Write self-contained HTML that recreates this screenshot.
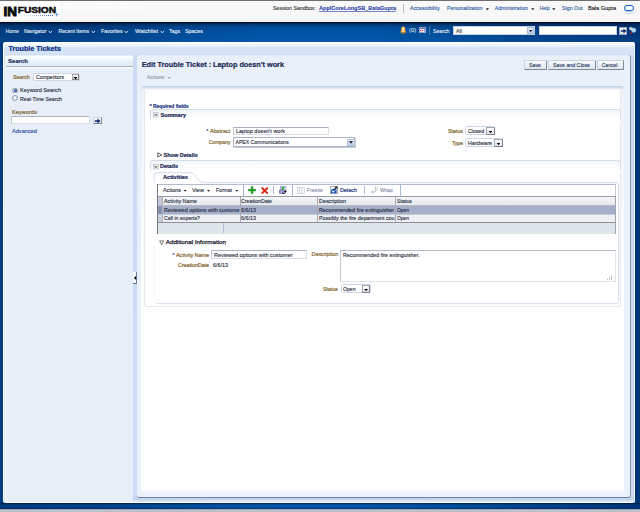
<!DOCTYPE html>
<html><head><meta charset="utf-8"><title>Trouble Tickets</title>
<style>
html,body{margin:0;padding:0}
body{width:640px;height:512px;overflow:hidden;position:relative;background:linear-gradient(90deg,#003d80 0,#004087 14%,#004892 24%,#004f9e 32%,#0054a6 42%,#0054a6 58%,#004d9b 70%,#004189 85%,#003678 100%);font-family:'Liberation Sans',sans-serif}
div,span,svg{position:absolute;box-sizing:border-box}
.t{white-space:pre;transform-origin:0 50%}
.inp{background:#fff;border:1px solid #d9dfe7;border-top-color:#aab4c0;border-left-color:#bfc8d3}
.sel{background:#fff;border:1px solid #cbd6e8;border-radius:1.5px}
.ddb{background:linear-gradient(#fff,#e1e4ea);border:0.9px solid #a4a7ad;border-right-color:#7b7e85;border-bottom-color:#7b7e85}
.ddb i{position:absolute;left:50%;top:50%;margin:0px 0 0 -2px;width:4px;height:2.4px;background:#000;clip-path:polygon(0 0,100% 0,50% 100%)}
.btn{background:linear-gradient(#f9fafb,#e0e4ea);border:1px solid #cdd3dc;border-right-color:#7f8897;border-bottom-color:#7f8897;border-radius:1px}
.arr{width:4px;height:2.3px;background:#222;clip-path:polygon(0 0,100% 0,50% 100%)}
.vs{width:1px;background:#a9b8d2}
.rad{border-radius:50%;border:1px solid #8f99a7;background:radial-gradient(#fbfbfc 25%,#cdd2da)}
</style></head><body>
<!-- header -->
<div style="left:0;top:0;width:640px;height:23px;background:linear-gradient(#f9f9f9 0,#f7f7f7 75%,#f2f2f2 100%);border-top:1px solid #6f6f6f"></div>
<div style="left:0;top:22.1px;width:640px;height:1.3px;background:#0a0d18"></div>
<div style="left:0;top:23.3px;width:640px;height:19.2px;background:linear-gradient(rgba(0,10,40,.62) 0,rgba(0,15,50,.25) 2.5px,rgba(0,20,60,.08) 5px,rgba(0,20,60,0) 9px,rgba(40,120,220,.10) 100%),linear-gradient(90deg,#003d80 0,#004087 14%,#004892 24%,#004f9e 32%,#0054a6 42%,#0054a6 58%,#004d9b 70%,#004189 85%,#003678 100%)"></div>
<!-- logo -->
<div style="left:3px;top:2px;width:57px;height:17px;background:#fff"></div>
<div style="left:18px;top:14.9px;width:36px;height:1.2px;background:repeating-linear-gradient(90deg,#3f72c4 0,#3f72c4 1px,#fff 1px,#fff 2px)"></div>
<div style="left:18px;top:14.9px;width:30px;height:1.2px;background:linear-gradient(90deg,rgba(255,255,255,.9),rgba(255,255,255,.75) 40%,rgba(255,255,255,0))"></div>
<div style="left:56px;top:11.6px;width:1.1px;height:5.6px;background:linear-gradient(rgba(60,120,210,0),#3c78d2 45%,#3c78d2 60%,rgba(60,120,210,0))"></div>
<div style="left:53.6px;top:13.9px;width:6.4px;height:1px;background:linear-gradient(90deg,rgba(60,120,210,0),#5c90dc 50%,rgba(60,120,210,0))"></div>
<!-- header right -->
<div class="vs" style="left:403px;top:4px;height:8.5px;background:#b7c0cf"></div>
<div class="arr" style="left:485.6px;top:8.2px;width:3.5px;height:2px;background:#2a2a2a"></div>
<div class="arr" style="left:531px;top:8.2px;width:3.5px;height:2px;background:#2a2a2a"></div>
<div class="arr" style="left:552px;top:8.2px;width:3.5px;height:2px;background:#2a2a2a"></div>
<div style="left:624.6px;top:11.6px;width:9px;height:2.4px;border-radius:50%;border:0.8px solid #c9dcf5;border-top:0"></div>
<div style="left:624px;top:5px;width:10.3px;height:6px;border-radius:3px;border:1.4px solid #1560c8;box-shadow:0 0.5px 0.5px #6d9de0"></div>
<!-- nav arrows (chevrons) -->
<svg style="left:48px;top:29.5px" width="5" height="4" viewBox="0 0 5 4"><path d="M0.6 0.8 L2.3 2.9 L4 0.8" fill="none" stroke="#dfe8f5" stroke-width="0.9"/></svg>
<svg style="left:90.5px;top:29.5px" width="5" height="4" viewBox="0 0 5 4"><path d="M0.6 0.8 L2.3 2.9 L4 0.8" fill="none" stroke="#dfe8f5" stroke-width="0.9"/></svg>
<svg style="left:123.8px;top:29.5px" width="5" height="4" viewBox="0 0 5 4"><path d="M0.6 0.8 L2.3 2.9 L4 0.8" fill="none" stroke="#dfe8f5" stroke-width="0.9"/></svg>
<svg style="left:159.6px;top:29.5px" width="5" height="4" viewBox="0 0 5 4"><path d="M0.6 0.8 L2.3 2.9 L4 0.8" fill="none" stroke="#dfe8f5" stroke-width="0.9"/></svg>
<!-- bell -->
<svg style="left:399.4px;top:25.9px" width="8.4" height="8.4" viewBox="0 0 8 8"><path d="M4 0.5 C5.7 0.5 5.9 2 5.9 3.5 C5.9 4.8 6.5 5.2 7.5 6.3 L0.5 6.3 C1.5 5.2 2.1 4.8 2.1 3.5 C2.1 2 2.3 0.5 4 0.5 Z" fill="#f5a31a"/><path d="M4 1 C5 1 5.1 2.3 5.1 3.6 L5.2 5.6 L2.8 5.6 L2.9 3.6 C2.9 2.3 3 1 4 1Z" fill="#fcdba0"/><ellipse cx="4" cy="6.9" rx="1" ry="0.7" fill="#ee9a14"/></svg>
<!-- flag icon -->
<div style="left:418.8px;top:27.3px;width:7.1px;height:5.9px;background:linear-gradient(#6b6fae 0,#6b6fae 1px,#eef0f5 1.2px,#d9dde8 4.6px,#fff 4.9px);border:0.4px solid #9aa3bd"></div>
<div style="left:420.2px;top:29.9px;width:1.3px;height:1.6px;background:#e81414"></div>
<div style="left:421.9px;top:29.9px;width:1.3px;height:1.6px;background:#e81414"></div>
<div style="left:423.6px;top:29px;width:1.6px;height:2.8px;background:#9aa6cf"></div>
<div class="vs" style="left:429px;top:26.2px;height:8.6px;background:#4d72a6"></div>
<!-- nav search -->
<div style="left:453px;top:26.2px;width:82px;height:8.6px;background:#fff;border:0.5px solid #c5cedc"></div>
<div class="ddb" style="left:527px;top:27px;width:7.4px;height:7px;background:linear-gradient(#e8effa,#bccdec);border-color:#a9b9d6"><i style="margin-top:-0.9px"></i></div>
<div style="left:538.5px;top:26.2px;width:78.5px;height:8.6px;background:#fff;border:0.5px solid #c5cedc"></div>
<div style="left:618.6px;top:26.6px;width:8.4px;height:8px;background:linear-gradient(#fff,#e6e9ef);border:0.5px solid #9aa3b3"></div>
<svg style="left:619.6px;top:27.6px" width="7" height="6" viewBox="0 0 7 6"><path d="M0.8 2.25 H3.5 V0.5 L6.4 3 L3.5 5.5 V3.75 H0.8 Z" fill="#0a2766"/></svg>
<svg style="left:629px;top:27px" width="7.5" height="7.5" viewBox="0 0 7.5 7.5"><rect x="0.3" y="0.3" width="3" height="2.6" fill="#d5dde8"/><circle cx="4.6" cy="3.2" r="2" fill="#9fd0f0" stroke="#d6e6f5" stroke-width="0.8"/><path d="M3 4.9 L1.2 6.8" stroke="#d01818" stroke-width="1.1"/></svg>
<!-- outer panel -->
<div style="left:3px;top:42px;width:632px;height:461px;border-radius:3px;background:linear-gradient(#ffffff 0,#eaf1fb 4px,#d6e4f7 6px,#d3e2f6 12px,#cadbf2 14px,#cddcf2 455px,#bfd0ea 456.6px,#d9e5f5 459.4px,#fafcff 460.2px,#fafcff 100%);box-shadow:inset 1.2px 1px 0.5px #fff,inset -1px 0 0.5px #eef4fc"></div>
<!-- search panel -->
<div style="left:5.4px;top:55.2px;width:127.8px;height:446.6px;background:linear-gradient(#e7eef8 0,#e7eef8 11px,#fafcfe 12px,#e7eef8 15px,#e7eef8 100%);border-radius:2.5px 0 0 0;border-left:0.6px solid #f4f8fc"></div>
<div style="left:5.5px;top:55.5px;width:127.5px;height:11px;background:linear-gradient(#fdfeff,#dbe7f6);border-bottom:1px solid #b7b3b4;border-radius:2px 0 0 0"></div>
<div class="sel" style="left:33.4px;top:72.6px;width:46.6px;height:8.6px"></div>
<div class="ddb" style="left:71.6px;top:73.8px;width:7.8px;height:6.6px"><i></i></div>
<div class="rad" style="left:12.2px;top:87.6px;width:5.8px;height:5.8px"></div>
<div style="left:13.6px;top:89px;width:3px;height:3px;border-radius:50%;background:radial-gradient(#3f78d8,#173f98)"></div>
<div class="rad" style="left:12.2px;top:95.4px;width:5.8px;height:5.8px"></div>
<div class="inp" style="left:11.3px;top:115.6px;width:78.8px;height:8.6px"></div>
<div class="btn" style="left:93.3px;top:116.8px;width:8.4px;height:7.6px"></div>
<svg style="left:94.3px;top:117.6px" width="7" height="6" viewBox="0 0 7 6"><path d="M0.8 2.25 H3.5 V0.5 L6.4 3 L3.5 5.5 V3.75 H0.8 Z" fill="#0a2766"/></svg>
<!-- splitter handle -->
<div style="left:133.2px;top:272px;width:3.7px;height:11.6px;background:#f4f7fb;border-right:0.8px solid #6f7f98;border-bottom:0.8px solid #6f7f98"></div>
<svg style="left:133px;top:275px" width="4" height="6" viewBox="0 0 4 6"><path d="M3.1 0.8 L0.9 2.9 L3.1 5 Z" fill="#0a0a0a"/></svg>
<!-- main panel -->
<div style="left:137px;top:55.4px;width:493.6px;height:443px;background:#eaf0f9;border-radius:3px;border-right:1.2px solid #8596b0;border-bottom:1.1px solid #74859f"></div>
<div class="arr" style="left:167.4px;top:76.9px;width:3.4px;height:2px;background:#a3abb8"></div>
<div class="btn" style="left:524px;top:60px;width:22.5px;height:9.6px"></div>
<div class="btn" style="left:548px;top:60px;width:47.5px;height:9.6px"></div>
<div class="btn" style="left:597px;top:60px;width:26.5px;height:9.6px"></div>
<!-- inner panel -->
<div style="left:141px;top:85.5px;width:483.4px;height:407.5px;border-radius:3px;background:linear-gradient(#bccbe2 0,#d3deed 1.5px,#e6edf6 3px,#eff3f9 5px,#f4f7fb 90px,#fff 190px,#fff 403.5px,#f3f6fa 404.5px,#f3f6fa 100%)"></div>
<div style="left:144.4px;top:89.4px;width:476.4px;height:217.2px;background:#fff;border:1px solid #e5e9ef;border-top-color:#f6f8fb;border-radius:2.5px"></div>
<!-- Summary header -->
<div style="left:149.5px;top:109px;width:471px;height:12px;border-radius:2.5px 2.5px 0 0;border:1px solid #d3dce9;border-bottom:0;background:linear-gradient(#f3f6fa,#fff 80%)"></div>
<div style="left:149.5px;top:117px;width:471px;height:5px;background:linear-gradient(rgba(255,255,255,0),#fff)"></div>
<svg class="ic" style="left:153px;top:112.4px" width="6" height="6" viewBox="0 0 6 6"><rect x="0.5" y="0.6" width="4.6" height="4.4" fill="#f1f3f7" stroke="#b4bbc8" stroke-width="0.7"/><path d="M1.5 2.1 L2.8 3.6 L4.1 2.1" fill="none" stroke="#222" stroke-width="0.85"/></svg>
<div class="inp" style="left:233px;top:126.6px;width:96.2px;height:8.7px"></div>
<div class="sel" style="left:233px;top:137.4px;width:122.4px;height:9.2px;border-color:#a9b5c6;border-radius:0;box-shadow:0.5px 0.5px 0.5px #c5ccd6"></div>
<div class="ddb" style="left:347.4px;top:138.6px;width:7.2px;height:7px;background:linear-gradient(#e3ecfa,#b9cbea);border-color:#b3c3df"><i style="margin-top:-0.9px"></i></div>
<div class="sel" style="left:465.2px;top:126.2px;width:29.8px;height:9.2px"></div>
<div class="ddb" style="left:486.2px;top:127px;width:8.6px;height:7.6px"><i></i></div>
<div class="sel" style="left:465.2px;top:138.2px;width:37.8px;height:9.2px"></div>
<div class="ddb" style="left:494.2px;top:139px;width:8.6px;height:7.6px"><i></i></div>
<svg style="left:156.5px;top:152px" width="6" height="6" viewBox="0 0 6 6"><path d="M0.8 0.8 L4.8 2.9 L0.8 5 Z" fill="#fff" stroke="#333" stroke-width="0.8"/></svg>
<!-- Details header -->
<div style="left:149.5px;top:160.4px;width:471px;height:12px;border-radius:2.5px 2.5px 0 0;border:1px solid #d3dce9;border-bottom:0;background:linear-gradient(#f3f6fa,#fff 80%)"></div>
<div style="left:149.5px;top:168.4px;width:471px;height:5px;background:linear-gradient(rgba(255,255,255,0),#fff)"></div>
<svg class="ic" style="left:153px;top:163.6px" width="6" height="6" viewBox="0 0 6 6"><rect x="0.5" y="0.6" width="4.6" height="4.4" fill="#f1f3f7" stroke="#b4bbc8" stroke-width="0.7"/><path d="M1.5 2.1 L2.8 3.6 L4.1 2.1" fill="none" stroke="#222" stroke-width="0.85"/></svg>
<!-- tab + tab panel -->
<svg style="left:150px;top:170px" width="472" height="136" viewBox="0 0 472 136"><path d="M4 131.4 L4 6 Q4 2.6 7.5 2.6 L39 2.6 C47 2.6 46 12.6 55 12.6 L466 12.6 Q468.6 12.6 468.6 15 L468.6 131.4 Q468.6 133.7 466 133.7 L6.4 133.7 Q4 133.7 4 131.4 Z" fill="#fff"/><path d="M4 12.6 L4 6 Q4 2.6 7.5 2.6 L39 2.6 C47 2.6 46 12.6 55 12.6 L466 12.6 Q468.6 12.6 468.6 15 L468.6 131.4 Q468.6 133.7 466 133.7 L6.4 133.7" fill="none" stroke="#ccd8ea" stroke-width="0.9"/><path d="M4 12.6 L4 131.4 Q4 133.7 6.4 133.7" fill="none" stroke="#f2f5f9" stroke-width="0.9"/></svg>
<!-- table -->
<div style="left:157px;top:183.6px;width:459px;height:13px;background:#fff;border:1px solid #c9c9cc;border-top-color:#b2bccc;border-left:0;border-bottom:0"></div>
<div class="vs" style="left:400px;top:184.4px;height:11.8px;background:#a9b9d6"></div>
<div style="left:157px;top:195.8px;width:458.8px;height:38.2px;background:#dfe6e9;border-right:1px solid #a2a6ab"></div>
<div style="left:157px;top:195.8px;width:458px;height:9.9px;background:linear-gradient(#f6f7f9,#e5e8ed);border-top:0.9px solid #989ea7;border-bottom:0.8px solid #b7bac0"></div>
<div style="left:157px;top:205.6px;width:458px;height:8.4px;background:#a7b0cb"></div>
<div style="left:157px;top:214px;width:458px;height:9px;background:#eef0f4;border-top:0.6px solid #c9ccd6;border-bottom:0.9px solid #8b9097"></div>
<div style="left:158px;top:196.6px;width:4px;height:8.6px;background:#c3c9d9"></div>
<div style="left:158px;top:205.6px;width:4px;height:8.4px;background:#8791b3"></div>
<div style="left:158px;top:214.4px;width:4px;height:7.8px;background:#c9cedd"></div>
<div style="left:162px;top:196.6px;width:0.8px;height:25.6px;background:#aeb2bb"></div>
<div style="left:239.8px;top:196.6px;width:0.9px;height:25.6px;background:#a9acb4"></div>
<div style="left:317px;top:196.6px;width:0.9px;height:25.6px;background:#a9acb4"></div>
<div style="left:395.1px;top:196.6px;width:0.9px;height:25.6px;background:#a9acb4"></div>
<div style="left:223px;top:223.4px;width:0.9px;height:10px;background:#b4bdd6"></div>
<div style="left:157px;top:183.6px;width:0.9px;height:50.4px;background:#747678"></div>
<!-- toolbar bits -->
<div class="arr" style="left:183.4px;top:189.7px;width:3.5px;height:2px"></div>
<div class="arr" style="left:206.8px;top:189.7px;width:3.5px;height:2px"></div>
<div class="arr" style="left:235px;top:189.7px;width:3.5px;height:2px"></div>
<div class="vs" style="left:243px;top:185px;height:10.6px"></div>
<svg style="left:247.9px;top:186.1px" width="8.2" height="8.2" viewBox="0 0 8.2 8.2"><path d="M3.25 0.5 H4.95 V3.25 H7.7 V4.95 H4.95 V7.7 H3.25 V4.95 H0.5 V3.25 H3.25 Z" fill="#1aa81c" stroke="#0c7a10" stroke-width="0.45"/></svg>
<svg style="left:260.6px;top:186.8px" width="7.6" height="7.4" viewBox="0 0 7.6 7.4"><path d="M1.3 1.3 L6.3 6.2 M6.3 1.3 L1.3 6.2" stroke="#a01208" stroke-width="2.1" stroke-linecap="round" opacity=".35"/><path d="M1.2 1.1 L6.2 6 M6.2 1.1 L1.2 6" stroke="#e3200f" stroke-width="1.7" stroke-linecap="round"/></svg>
<div class="vs" style="left:273px;top:186.2px;height:7.6px"></div>
<svg style="left:279px;top:186px" width="8.2" height="8.2" viewBox="0 0 8.2 8.2"><rect x="1.4" y="0.4" width="5.6" height="5.6" fill="#e9ebfa" stroke="#7d80c8" stroke-width="0.6"/><path d="M2.7 1.2 L5.3 3.9 M5.3 1.2 L2.7 3.9" stroke="#14a014" stroke-width="1.15"/><rect x="0.2" y="3.7" width="4.7" height="4.1" fill="#6a66b8"/><rect x="1.6" y="4.6" width="1.2" height="1" fill="#fff"/><rect x="3.3" y="4.6" width="1" height="1" fill="#f3f3ff"/><rect x="1.6" y="6.2" width="1.2" height="0.9" fill="#fff"/><rect x="3.4" y="7" width="2.4" height="0.9" fill="#2a1a60"/><path d="M5 5.5 L6.3 4 L7.7 5.5 L6.3 7.1 Z" fill="#0a0a0a"/></svg>
<div class="vs" style="left:292.4px;top:185px;height:10.6px"></div>
<svg style="left:297px;top:186.8px" width="8" height="7" viewBox="0 0 8 7"><rect x="0.4" y="0.4" width="7.2" height="6.2" fill="#f7f8fa" stroke="#c2c7d0" stroke-width="0.7"/><path d="M2.6 0.4 V6.6 M5 0.4 V6.6" stroke="#c9cdd5" stroke-width="0.7"/></svg>
<svg style="left:330px;top:186px" width="8.2" height="8.2" viewBox="0 0 8.2 8.2"><defs><linearGradient id="dg" x1="0" y1="0" x2="0" y2="1"><stop offset="0" stop-color="#5aa6f8"/><stop offset="1" stop-color="#0a38a0"/></linearGradient></defs><rect x="0.45" y="0.45" width="7" height="7.3" fill="#fff" stroke="#9a9a9a" stroke-width="0.75"/><rect x="0.95" y="2.9" width="5.7" height="4.4" fill="url(#dg)"/><ellipse cx="3.3" cy="5.7" rx="1.3" ry="0.8" fill="#fff"/><path d="M3.5 4.2 L6.2 1.5" stroke="#151515" stroke-width="1.1"/><path d="M4.7 0.5 H7.4 V3.2 Z" fill="#111"/></svg>
<div class="vs" style="left:364px;top:186px;height:7.8px"></div>
<svg style="left:370.4px;top:186.4px" width="8" height="7.6" viewBox="0 0 8 7.6"><path d="M5.6 0.6 V4.6 Q5.6 6 4.2 6 H1.6 M3 4.6 L1.4 6 L3 7.2" fill="none" stroke="#b4b9c2" stroke-width="1"/><path d="M7.2 0.8 V5" stroke="#c7cbd2" stroke-width="0.8"/></svg>
<!-- additional info -->
<svg style="left:158.8px;top:239.8px" width="6" height="6" viewBox="0 0 6 6"><path d="M0.6 0.9 L4.6 0.9 L2.6 4.7 Z" fill="#fff" stroke="#444" stroke-width="0.7"/></svg>
<div class="inp" style="left:211.2px;top:250px;width:95.8px;height:9.3px"></div>
<div class="inp" style="left:340px;top:250px;width:275.5px;height:31.7px;border-top-color:#b2bac5;border-left-color:#c3cad4;border-right-color:#dde3e8;border-bottom-color:#dde3e8"></div>
<svg style="left:606px;top:274px" width="7" height="7" viewBox="0 0 7 7"><path d="M1.5 6 V4.6 M3.5 6 V3 M5.5 6 V1.2" stroke="#a4a9b2" stroke-width="0.7"/></svg>
<div class="sel" style="left:340.8px;top:284.2px;width:29.8px;height:9.2px"></div>
<div class="ddb" style="left:361.8px;top:285px;width:8.6px;height:7.6px"><i></i></div>
<!-- bottom -->
<div style="left:0;top:502.8px;width:640px;height:5.9px;background:linear-gradient(rgba(0,10,45,.75) 0,rgba(0,15,50,.25) 1px,rgba(0,20,60,0) 2px,rgba(0,20,60,0) 4.4px,rgba(0,10,45,.55) 100%)"></div>
<div style="left:0;top:508.6px;width:640px;height:3.4px;background:linear-gradient(#9aa4b4,#b3bbc8 1px,#bcc3ce)"></div>
<svg style="left:0;top:0" width="640" height="512" viewBox="0 0 640 512" font-family="'Liberation Sans', sans-serif" font-size="5.6">
<text x="3.5" y="15.94" textLength="13.4" lengthAdjust="spacingAndGlyphs" fill="#0d0d0d" font-size="12.4" font-weight="bold" stroke="#0d0d0d" stroke-width="0.9">IN</text>
<text x="17.7" y="13.04" textLength="38.3" lengthAdjust="spacingAndGlyphs" fill="#0d0d0d" font-size="8.5" font-weight="bold" stroke="#0d0d0d" stroke-width="0.5">FUSION</text>
<text x="273" y="10.10" textLength="43" lengthAdjust="spacingAndGlyphs" fill="#333" stroke="#333" stroke-width="0.12">Session Sandbox:</text>
<text x="319" y="10.10" textLength="77" lengthAdjust="spacingAndGlyphs" fill="#16329e" font-weight="bold" text-decoration="underline" stroke="#16329e" stroke-width="0.05">ApplCoreLongSB_BalaGupta</text>
<text x="410" y="10.10" textLength="29.7" lengthAdjust="spacingAndGlyphs" fill="#2c58a3" stroke="#2c58a3" stroke-width="0.12">Accessibility</text>
<text x="447" y="10.10" textLength="35.5" lengthAdjust="spacingAndGlyphs" fill="#2c58a3" stroke="#2c58a3" stroke-width="0.12">Personalization</text>
<text x="494.7" y="10.10" textLength="33.3" lengthAdjust="spacingAndGlyphs" fill="#2c58a3" stroke="#2c58a3" stroke-width="0.12">Administration</text>
<text x="539.7" y="10.10" textLength="10.1" lengthAdjust="spacingAndGlyphs" fill="#2c58a3" stroke="#2c58a3" stroke-width="0.12">Help</text>
<text x="562" y="10.10" textLength="20.6" lengthAdjust="spacingAndGlyphs" fill="#2c58a3" stroke="#2c58a3" stroke-width="0.12">Sign Out</text>
<text x="588" y="10.10" textLength="28" lengthAdjust="spacingAndGlyphs" fill="#111" stroke="#111" stroke-width="0.12">Bala Gupta</text>
<text x="64.6" y="10.06" textLength="76.4" lengthAdjust="spacingAndGlyphs" fill="#ffffff" font-size="8" stroke="#ffffff" stroke-width="0.1">Fusion Applications</text>
<text x="5.8" y="32.90" textLength="13.1" lengthAdjust="spacingAndGlyphs" fill="#e8eef8" stroke="#e8eef8" stroke-width="0.12">Home</text>
<text x="23.9" y="32.90" textLength="22.5" lengthAdjust="spacingAndGlyphs" fill="#e8eef8" stroke="#e8eef8" stroke-width="0.12">Navigator</text>
<text x="58.5" y="32.90" textLength="30.5" lengthAdjust="spacingAndGlyphs" fill="#e8eef8" stroke="#e8eef8" stroke-width="0.12">Recent Items</text>
<text x="101" y="32.90" textLength="21.5" lengthAdjust="spacingAndGlyphs" fill="#e8eef8" stroke="#e8eef8" stroke-width="0.12">Favorites</text>
<text x="135" y="32.90" textLength="23" lengthAdjust="spacingAndGlyphs" fill="#e8eef8" stroke="#e8eef8" stroke-width="0.12">Watchlist</text>
<text x="169" y="32.90" textLength="11" lengthAdjust="spacingAndGlyphs" fill="#e8eef8" stroke="#e8eef8" stroke-width="0.12">Tags</text>
<text x="185" y="32.90" textLength="18" lengthAdjust="spacingAndGlyphs" fill="#e8eef8" stroke="#e8eef8" stroke-width="0.12">Spaces</text>
<text x="409" y="32.30" textLength="7.2" lengthAdjust="spacingAndGlyphs" fill="#e8eef8" stroke="#e8eef8" stroke-width="0.04">(0)</text>
<text x="433" y="32.70" textLength="16.5" lengthAdjust="spacingAndGlyphs" fill="#e8eef8" stroke="#e8eef8" stroke-width="0.12">Search</text>
<text x="456" y="32.70" textLength="6" lengthAdjust="spacingAndGlyphs" fill="#333" stroke="#333" stroke-width="0.12">All</text>
<text x="8.4" y="51.07" textLength="52.6" lengthAdjust="spacingAndGlyphs" fill="#0b2d82" font-size="6.9" font-weight="bold" stroke="#0b2d82" stroke-width="0.22">Trouble Tickets</text>
<text x="8.1" y="62.82" textLength="19.9" lengthAdjust="spacingAndGlyphs" fill="#1f3564" font-size="6.2" font-weight="bold" stroke="#1f3564" stroke-width="0.22">Search</text>
<text x="13" y="79.00" textLength="16.7" lengthAdjust="spacingAndGlyphs" fill="#84672f" stroke="#84672f" stroke-width="0.2">Search</text>
<text x="36" y="79.00" textLength="28" lengthAdjust="spacingAndGlyphs" fill="#222a3a" stroke="#222a3a" stroke-width="0.12">Competitors</text>
<text x="20" y="92.30" textLength="41" lengthAdjust="spacingAndGlyphs" fill="#222a3a" stroke="#222a3a" stroke-width="0.12">Keyword Search</text>
<text x="20" y="100.70" textLength="42" lengthAdjust="spacingAndGlyphs" fill="#222a3a" stroke="#222a3a" stroke-width="0.12">Real-Time Search</text>
<text x="12" y="113.60" textLength="25" lengthAdjust="spacingAndGlyphs" fill="#84672f" stroke="#84672f" stroke-width="0.2">Keywords</text>
<text x="12" y="133.00" textLength="25" lengthAdjust="spacingAndGlyphs" fill="#1f4a9c" stroke="#1f4a9c" stroke-width="0.12">Advanced</text>
<text x="141.7" y="67.22" textLength="142.3" lengthAdjust="spacingAndGlyphs" fill="#1a2a55" font-size="7.6" font-weight="bold" stroke="#1a2a55" stroke-width="0.22">Edit Trouble Ticket : Laptop doesn't work</text>
<text x="146.7" y="79.30" textLength="17.6" lengthAdjust="spacingAndGlyphs" fill="#8e98a8" stroke="#8e98a8" stroke-width="0.12">Actions</text>
<text x="149.7" y="107.93" textLength="38.8" lengthAdjust="spacingAndGlyphs" fill="#1f3a8a" font-size="5.4" font-weight="bold" stroke="#1f3a8a" stroke-width="0.22">* Required fields</text>
<text x="160.5" y="117.00" textLength="25.5" lengthAdjust="spacingAndGlyphs" fill="#1a2a55" font-weight="bold" stroke="#1a2a55" stroke-width="0.22">Summary</text>
<text x="206.3" y="133.20" textLength="2.0" lengthAdjust="spacingAndGlyphs" fill="#1f3a8a" stroke="#1f3a8a" stroke-width="0.12">*</text>
<text x="210" y="132.80" textLength="20.3" lengthAdjust="spacingAndGlyphs" fill="#84672f" stroke="#84672f" stroke-width="0.2">Abstract</text>
<text x="236" y="132.80" textLength="49" lengthAdjust="spacingAndGlyphs" fill="#222a3a" stroke="#222a3a" stroke-width="0.12">Laptop doesn't work</text>
<text x="208.7" y="143.70" textLength="21.6" lengthAdjust="spacingAndGlyphs" fill="#84672f" stroke="#84672f" stroke-width="0.2">Company</text>
<text x="235.5" y="143.70" textLength="53.2" lengthAdjust="spacingAndGlyphs" fill="#222a3a" stroke="#222a3a" stroke-width="0.12">APEX Communications</text>
<text x="448" y="133.00" textLength="15" lengthAdjust="spacingAndGlyphs" fill="#84672f" stroke="#84672f" stroke-width="0.22">Status</text>
<text x="467.8" y="133.10" textLength="16.4" lengthAdjust="spacingAndGlyphs" fill="#222a3a" stroke="#222a3a" stroke-width="0.12">Closed</text>
<text x="452" y="145.00" textLength="11" lengthAdjust="spacingAndGlyphs" fill="#84672f" stroke="#84672f" stroke-width="0.22">Type</text>
<text x="467.8" y="145.10" textLength="24.4" lengthAdjust="spacingAndGlyphs" fill="#222a3a" stroke="#222a3a" stroke-width="0.12">Hardware</text>
<text x="163.5" y="156.90" textLength="34.3" lengthAdjust="spacingAndGlyphs" fill="#1a2a55" font-weight="bold" stroke="#1a2a55" stroke-width="0.22">Show Details</text>
<text x="160" y="167.80" textLength="18" lengthAdjust="spacingAndGlyphs" fill="#1a2a55" font-weight="bold" stroke="#1a2a55" stroke-width="0.22">Details</text>
<text x="163" y="179.00" textLength="25" lengthAdjust="spacingAndGlyphs" fill="#1a2a55" font-weight="bold" stroke="#1a2a55" stroke-width="0.22">Activities</text>
<text x="163" y="192.00" textLength="18" lengthAdjust="spacingAndGlyphs" fill="#222a3a" stroke="#222a3a" stroke-width="0.12">Actions</text>
<text x="192" y="192.00" textLength="12" lengthAdjust="spacingAndGlyphs" fill="#222a3a" stroke="#222a3a" stroke-width="0.12">View</text>
<text x="216" y="192.00" textLength="16" lengthAdjust="spacingAndGlyphs" fill="#222a3a" stroke="#222a3a" stroke-width="0.12">Format</text>
<text x="306.7" y="192.00" textLength="16.3" lengthAdjust="spacingAndGlyphs" fill="#7f8ea9" stroke="#7f8ea9" stroke-width="0.12">Freeze</text>
<text x="340" y="192.00" textLength="17" lengthAdjust="spacingAndGlyphs" fill="#1c3a7e" stroke="#1c3a7e" stroke-width="0.2">Detach</text>
<text x="380" y="192.00" textLength="12.6" lengthAdjust="spacingAndGlyphs" fill="#7f8ea9" stroke="#7f8ea9" stroke-width="0.12">Wrap</text>
<text x="164" y="203.00" textLength="33" lengthAdjust="spacingAndGlyphs" fill="#222a3a" stroke="#222a3a" stroke-width="0.12">Activity Name</text>
<text x="241" y="203.00" textLength="31" lengthAdjust="spacingAndGlyphs" fill="#222a3a" stroke="#222a3a" stroke-width="0.12">CreationDate</text>
<text x="319" y="203.00" textLength="27" lengthAdjust="spacingAndGlyphs" fill="#222a3a" stroke="#222a3a" stroke-width="0.12">Description</text>
<text x="397" y="203.00" textLength="15" lengthAdjust="spacingAndGlyphs" fill="#222a3a" stroke="#222a3a" stroke-width="0.12">Status</text>
<text x="164" y="212.00" textLength="75.5" lengthAdjust="spacingAndGlyphs" fill="#222a3a" stroke="#222a3a" stroke-width="0.12">Reviewed options with custome</text>
<text x="241" y="212.00" textLength="15" lengthAdjust="spacingAndGlyphs" fill="#222a3a" stroke="#222a3a" stroke-width="0.12">6/6/13</text>
<text x="319" y="212.00" textLength="75" lengthAdjust="spacingAndGlyphs" fill="#222a3a" stroke="#222a3a" stroke-width="0.12">Recommended fire extinguisher</text>
<text x="397" y="212.00" textLength="12" lengthAdjust="spacingAndGlyphs" fill="#222a3a" stroke="#222a3a" stroke-width="0.12">Open</text>
<text x="164" y="220.10" textLength="36" lengthAdjust="spacingAndGlyphs" fill="#222a3a" stroke="#222a3a" stroke-width="0.12">Call in experts?</text>
<text x="241" y="220.10" textLength="15" lengthAdjust="spacingAndGlyphs" fill="#222a3a" stroke="#222a3a" stroke-width="0.12">6/6/13</text>
<text x="319" y="220.10" textLength="75.5" lengthAdjust="spacingAndGlyphs" fill="#222a3a" stroke="#222a3a" stroke-width="0.12">Possibly the fire department cou</text>
<text x="397" y="220.10" textLength="12" lengthAdjust="spacingAndGlyphs" fill="#222a3a" stroke="#222a3a" stroke-width="0.12">Open</text>
<text x="165.8" y="244.38" textLength="60.2" lengthAdjust="spacingAndGlyphs" fill="#1c2030" font-size="5.8" stroke="#1c2030" stroke-width="0.25">Additional Information</text>
<text x="172.5" y="257.30" textLength="2.0" lengthAdjust="spacingAndGlyphs" fill="#1f3a8a" stroke="#1f3a8a" stroke-width="0.12">*</text>
<text x="176" y="257.10" textLength="33" lengthAdjust="spacingAndGlyphs" fill="#84672f" stroke="#84672f" stroke-width="0.2">Activity Name</text>
<text x="214" y="257.10" textLength="78.5" lengthAdjust="spacingAndGlyphs" fill="#222a3a" stroke="#222a3a" stroke-width="0.12">Reviewed options with customer</text>
<text x="178" y="267.10" textLength="31" lengthAdjust="spacingAndGlyphs" fill="#84672f" stroke="#84672f" stroke-width="0.22">CreationDate</text>
<text x="213" y="267.10" textLength="15" lengthAdjust="spacingAndGlyphs" fill="#222a3a" stroke="#222a3a" stroke-width="0.12">6/6/13</text>
<text x="311.6" y="255.80" textLength="26.7" lengthAdjust="spacingAndGlyphs" fill="#84672f" stroke="#84672f" stroke-width="0.2">Description</text>
<text x="343" y="257.10" textLength="76.5" lengthAdjust="spacingAndGlyphs" fill="#222a3a" stroke="#222a3a" stroke-width="0.12">Recommended fire extinguisher.</text>
<text x="323" y="291.10" textLength="15" lengthAdjust="spacingAndGlyphs" fill="#84672f" stroke="#84672f" stroke-width="0.22">Status</text>
<text x="343" y="291.10" textLength="12.5" lengthAdjust="spacingAndGlyphs" fill="#222a3a" stroke="#222a3a" stroke-width="0.12">Open</text>
<text x="529" y="67.10" textLength="12" lengthAdjust="spacingAndGlyphs" fill="#1f3564" stroke="#1f3564" stroke-width="0.12">Save</text>
<text x="553" y="67.10" textLength="37" lengthAdjust="spacingAndGlyphs" fill="#1f3564" stroke="#1f3564" stroke-width="0.12">Save and Close</text>
<text x="601.7" y="67.10" textLength="15.8" lengthAdjust="spacingAndGlyphs" fill="#1f3564" stroke="#1f3564" stroke-width="0.12">Cancel</text>
</svg>
</body></html>
